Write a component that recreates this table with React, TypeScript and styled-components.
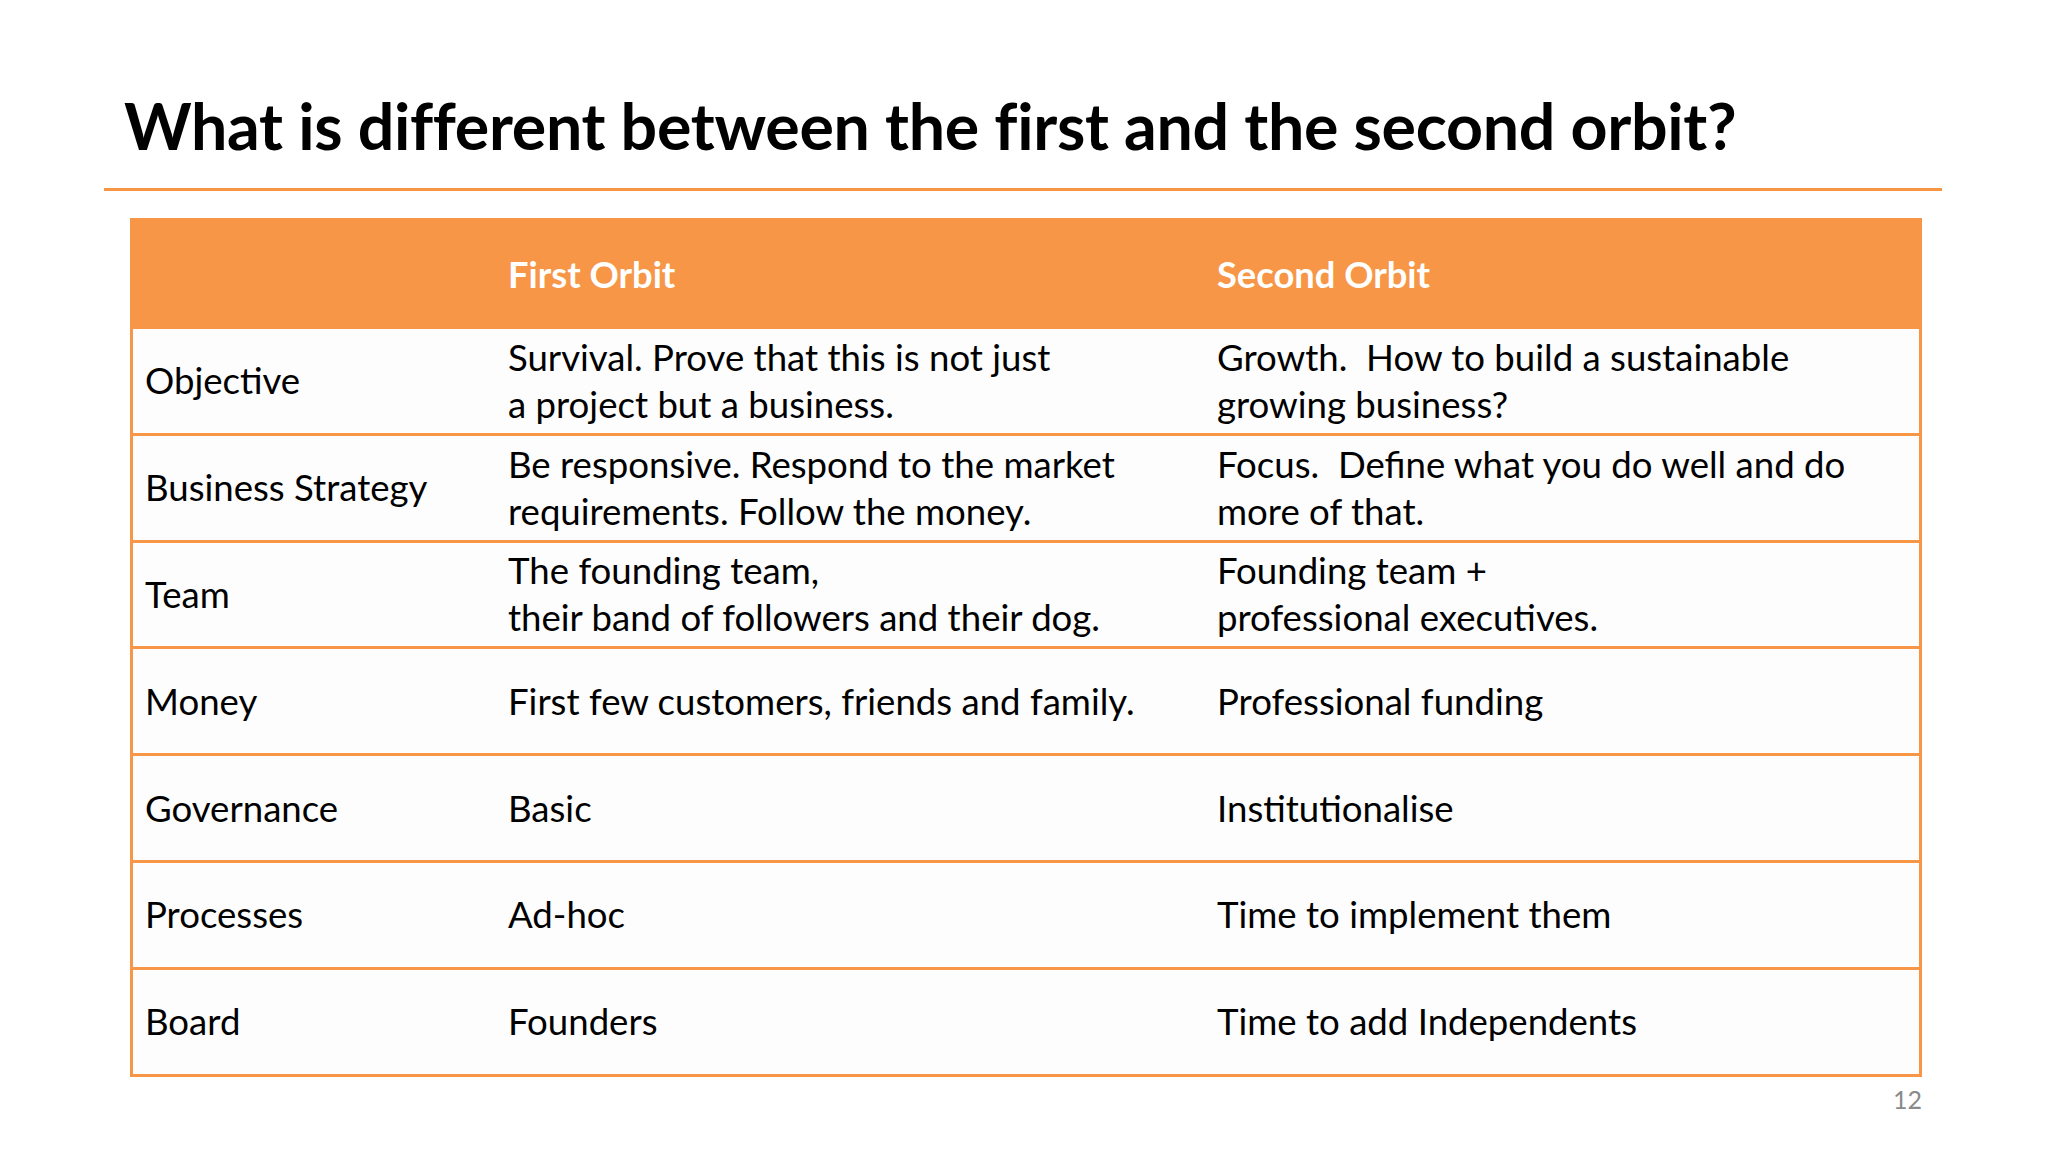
import React from "react";
import styled, { createGlobalStyle } from "styled-components";

const ORANGE = "#f79646";

const GlobalStyle = createGlobalStyle`
  html, body {
    margin: 0;
    padding: 0;
    background: #ffffff;
  }
  body {
    font-family: Lato, "Open Sans", "Liberation Sans", sans-serif;
    color: #000000;
  }
`;

interface RowData {
  label: string;
  first: string[];
  second: string[];
}

const rows: RowData[] = [
  {
    label: "Objective",
    first: ["Survival. Prove that this is not just", "a project but a business."],
    second: ["Growth.\u00a0 How to build a sustainable", "growing business?"],
  },
  {
    label: "Business Strategy",
    first: ["Be responsive. Respond to the market", "requirements. Follow the money."],
    second: ["Focus.\u00a0 Define what you do well and do", "more of that."],
  },
  {
    label: "Team",
    first: ["The founding team,", "their band of followers and their dog."],
    second: ["Founding team +", "professional executives."],
  },
  {
    label: "Money",
    first: ["First few customers, friends and family."],
    second: ["Professional funding"],
  },
  { label: "Governance", first: ["Basic"], second: ["Institutionalise"] },
  { label: "Processes", first: ["Ad-hoc"], second: ["Time to implement them"] },
  { label: "Board", first: ["Founders"], second: ["Time to add Independents"] },
];

const Lines = ({ lines }: { lines: string[] }) => (
  <span>
    {lines.map((l, i) => (
      <React.Fragment key={i}>
        {i > 0 && <br />}
        {l}
      </React.Fragment>
    ))}
  </span>
);

export default function App() {
  return (
    <>
      <GlobalStyle />
      <Slide>
        <Title>What is different between the first and the second orbit?</Title>
        <Rule />
        <Table>
          <HeaderRow>
            <HeadCell />
            <HeadCell>First Orbit</HeadCell>
            <HeadCell>Second Orbit</HeadCell>
          </HeaderRow>
          {rows.map((r) => (
            <BodyRow key={r.label}>
              <Cell>{r.label}</Cell>
              <Cell>
                <Lines lines={r.first} />
              </Cell>
              <Cell>
                <Lines lines={r.second} />
              </Cell>
            </BodyRow>
          ))}
        </Table>
        <PageNumber>12</PageNumber>
      </Slide>
    </>
  );
}

const Slide = styled.div`
  width: 2048px;
  height: 1152px;
  box-sizing: border-box;
  padding-top: 89px;
  background: #ffffff;
  overflow: hidden;
`;

const Title = styled.h1`
  margin: 0 0 0 124px;
  font-family: Lato, "Open Sans", sans-serif;
  font-weight: 700;
  font-size: 64.5px;
  line-height: 72px;
  letter-spacing: -0.3px;
  color: #000000;
  white-space: nowrap;
`;

const Rule = styled.div`
  margin: 27px 0 0 104px;
  width: 1838px;
  height: 3px;
  background: ${ORANGE};
`;

const Table = styled.div`
  margin: 27px 0 0 130px;
  width: 1792px;
  display: flex;
  flex-direction: column;
`;

const RowBase = styled.div`
  display: grid;
  grid-template-columns: 363px 709px 1fr;
  box-sizing: border-box;
  border-left: 3px solid ${ORANGE};
  border-right: 3px solid ${ORANGE};
`;

const HeaderRow = styled(RowBase)`
  height: 111px;
  background: ${ORANGE};
`;

const BodyRow = styled(RowBase)`
  height: 106.8px;
  background: #fdfdfd;
  border-bottom: 3px solid ${ORANGE};
`;

const HeadCell = styled.div`
  display: flex;
  align-items: center;
  padding: 0 12px;
  font-family: Lato, "Open Sans", sans-serif;
  font-weight: 700;
  font-size: 36.3px;
  color: #ffffff;
  white-space: nowrap;
`;

const Cell = styled.div`
  display: flex;
  align-items: center;
  padding: 0 12px;
  font-family: Lato, "Open Sans", sans-serif;
  font-weight: 400;
  font-size: 36.6px;
  line-height: 47px;
  color: #000000;
  white-space: nowrap;
`;

const PageNumber = styled.div`
  width: 1922px;
  margin-top: 7px;
  text-align: right;
  font-family: Lato, "Open Sans", sans-serif;
  font-size: 25px;
  color: #8a8a8a;
`;
